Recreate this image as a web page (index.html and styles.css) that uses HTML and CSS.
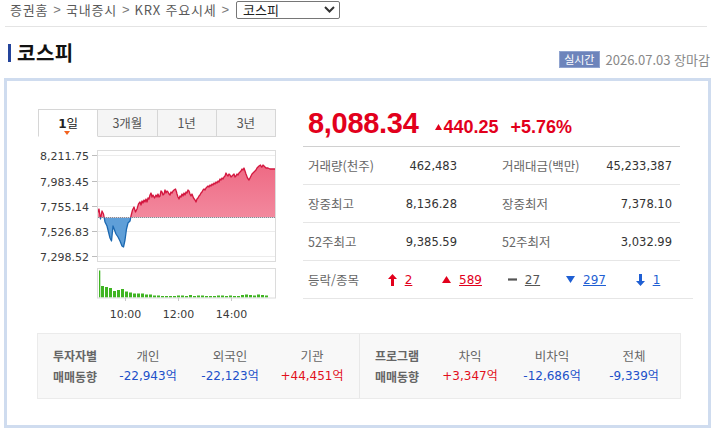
FILE: index.html
```html
<!DOCTYPE html>
<html lang="ko">
<head>
<meta charset="utf-8">
<title>코스피 : 국내증시</title>
<link rel="stylesheet" href="styles.css">
</head>
<body>
<nav class="crumbs">
  <a class="crumb">증권홈</a><span class="sep">&gt;</span>
  <a class="crumb">국내증시</a><span class="sep">&gt;</span>
  <a class="crumb">KRX 주요시세</a><span class="sep">&gt;</span>
  <div class="picker">
    <span>코스피</span>
    <svg width="11" height="7" viewBox="0 0 11 7"><path d="M1 1L5.5 5.5L10 1" fill="none" stroke="#333" stroke-width="2"/></svg>
  </div>
</nav>

<header class="title-row">
  <h2 class="title">코스피</h2>
  <div class="meta"><span class="badge">실시간</span><span class="stamp">2026.07.03 장마감</span></div>
</header>

<section class="board">
  <div class="top">
    <div class="chart-col">
      <ul class="tabs">
        <li class="tab on"><b>1</b>일</li>
        <li class="tab">3개월</li>
        <li class="tab">1년</li>
        <li class="tab">3년</li>
      </ul>
      <svg class="chart" width="240" height="170" viewBox="0 0 240 170">
        <defs>
          <clipPath id="above"><rect x="59" y="0" width="180" height="67.5"/></clipPath>
          <clipPath id="below"><rect x="59" y="67.5" width="180" height="45"/></clipPath>
          <linearGradient id="riseFill" x1="0" y1="0" x2="0" y2="1">
            <stop offset="0" stop-color="#ee6a84"/>
            <stop offset="1" stop-color="#f59aac"/>
          </linearGradient>
        </defs>
        <!-- price pane -->
        <g stroke="#ececec" stroke-width="1">
          <line x1="60" x2="237" y1="5.5" y2="5.5"/>
          <line x1="60" x2="237" y1="31.5" y2="31.5"/>
          <line x1="60" x2="237" y1="56.5" y2="56.5"/>
          <line x1="60" x2="237" y1="81.5" y2="81.5"/>
          <line x1="60" x2="237" y1="106.5" y2="106.5"/>
        </g>
        <g stroke="#bdbdbd" stroke-width="1">
          <line x1="54" x2="59" y1="5.5" y2="5.5"/>
          <line x1="54" x2="59" y1="31.5" y2="31.5"/>
          <line x1="54" x2="59" y1="56.5" y2="56.5"/>
          <line x1="54" x2="59" y1="81.5" y2="81.5"/>
          <line x1="54" x2="59" y1="106.5" y2="106.5"/>
        </g>
        <g class="axis" text-anchor="end">
          <text x="51" y="9.5">8,211.75</text>
          <text x="51" y="35.5">7,983.45</text>
          <text x="51" y="60.5">7,755.14</text>
          <text x="51" y="85.5">7,526.83</text>
          <text x="51" y="110.5">7,298.52</text>
        </g>
        <path fill="url(#riseFill)" clip-path="url(#above)" d="M59.5 67.5L59.5 63L61 59L62.5 69L64 61L65.5 64L67 72L69 76L70.5 82L72 88L73.5 91L75 76L76.5 80L78 84L80 87L82 91L84 96L85.5 97L87 90L88.5 79L90 73L92 71L93 66L94.5 60L96 57L97.5 62L99 59L100.5 54L102 52L103 55L104 51L105 53L106 50L107 52L108 49L109 52L110 48L111 49L112 45L113 43L114 47L115 45L116.5 48L118 45L119 47L120 44L121 47L122 46L123 41L124 42L125 45L126 44L127 40L128 43L129 41L130 42L131 44L132 45L133 42L134 43L135 41L136 40L137.5 39L138.5 42L139 44L140 47L141 49L142 46L143 47L144 44L145 46L146 43L147 45L148 42L149 43L150 40L151 41L152 44L153 46L154 44L155.5 48L157 50L158 52L159 49L160 48L161 46L162 45L163 43L164 42L165 40L166 39L167 40L168 38L169 37L170 36L171 37L172 35L173 36L174 34L175 35L176 33L177 34L178 32L179 33L180 31L181 32L182 29L183 30L184 28L185 29L186 27L187 26L188 23L189 25L190 26L191 24L192 25L193 27L194 26L195 25L196 24L197 27L198 26L199 24L200 25L201 23L202 22L203 21L204 19L205 20L206 18L207 21L208 24L209.5 28L211 30L212 28L213 26L214 24L215 23L216 22L217 21L218 20L219 18L220 17L221 16L222.5 15L223.5 17L224 17L225 15L226 16L227 17L228 18L230 18L232 19L234 19L236 19L237.5 19L237.5 67.5Z"/>
        <path fill="#5f9fd8" clip-path="url(#below)" d="M59.5 67.5L59.5 63L61 59L62.5 69L64 61L65.5 64L67 72L69 76L70.5 82L72 88L73.5 91L75 76L76.5 80L78 84L80 87L82 91L84 96L85.5 97L87 90L88.5 79L90 73L92 71L93 66L94.5 60L96 57L97.5 62L99 59L237.5 59L237.5 67.5Z"/>
        <line x1="60" x2="237" y1="67.5" y2="67.5" stroke="#8c8c8c" stroke-dasharray="1 1"/>
        <path fill="none" stroke="#d3173f" stroke-width="1.3" stroke-linejoin="round" clip-path="url(#above)" d="M59.5 63L61 59L62.5 69L64 61L65.5 64L67 72L69 76L70.5 82L72 88L73.5 91L75 76L76.5 80L78 84L80 87L82 91L84 96L85.5 97L87 90L88.5 79L90 73L92 71L93 66L94.5 60L96 57L97.5 62L99 59L100.5 54L102 52L103 55L104 51L105 53L106 50L107 52L108 49L109 52L110 48L111 49L112 45L113 43L114 47L115 45L116.5 48L118 45L119 47L120 44L121 47L122 46L123 41L124 42L125 45L126 44L127 40L128 43L129 41L130 42L131 44L132 45L133 42L134 43L135 41L136 40L137.5 39L138.5 42L139 44L140 47L141 49L142 46L143 47L144 44L145 46L146 43L147 45L148 42L149 43L150 40L151 41L152 44L153 46L154 44L155.5 48L157 50L158 52L159 49L160 48L161 46L162 45L163 43L164 42L165 40L166 39L167 40L168 38L169 37L170 36L171 37L172 35L173 36L174 34L175 35L176 33L177 34L178 32L179 33L180 31L181 32L182 29L183 30L184 28L185 29L186 27L187 26L188 23L189 25L190 26L191 24L192 25L193 27L194 26L195 25L196 24L197 27L198 26L199 24L200 25L201 23L202 22L203 21L204 19L205 20L206 18L207 21L208 24L209.5 28L211 30L212 28L213 26L214 24L215 23L216 22L217 21L218 20L219 18L220 17L221 16L222.5 15L223.5 17L224 17L225 15L226 16L227 17L228 18L230 18L232 19L234 19L236 19L237.5 19"/>
        <path fill="none" stroke="#1b68b0" stroke-width="1.3" stroke-linejoin="round" clip-path="url(#below)" d="M59.5 63L61 59L62.5 69L64 61L65.5 64L67 72L69 76L70.5 82L72 88L73.5 91L75 76L76.5 80L78 84L80 87L82 91L84 96L85.5 97L87 90L88.5 79L90 73L92 71L93 66L94.5 60L96 57L97.5 62L99 59"/>
        <rect x="59.5" y="0.5" width="178" height="111" fill="none" stroke="#dcdcdc"/>

        <!-- volume pane -->
        <path fill="#3fb422" d="M61 147.5h1.3v-27h-1.3z M63 147.5h3v-11.5h-3z M67 147.5h3v-10.5h-3z M71 147.5h3v-9.5h-3z M75 147.5h3v-6.5h-3z M79 147.5h3v-7.5h-3z M83 147.5h3v-8.5h-3z M87 147.5h3v-6h-3z M91 147.5h3v-5h-3z M95 147.5h3v-4h-3z M99 147.5h3v-4h-3z M103 147.5h3v-4h-3z M107 147.5h3v-3h-3z M111 147.5h3v-3h-3z M115 147.5h3v-2h-3z M119 147.5h3v-2h-3z M123 147.5h3v-1.5h-3z M127 147.5h3v-1.5h-3z M131 147.5h3v-1.5h-3z M135 147.5h3v-1.5h-3z M139 147.5h3v-2h-3z M143 147.5h3v-2h-3z M147 147.5h3v-1.5h-3z M151 147.5h3v-2.5h-3z M155 147.5h3v-1.5h-3z M159 147.5h3v-2h-3z M163 147.5h3v-2h-3z M167 147.5h3v-1.5h-3z M171 147.5h3v-1.5h-3z M175 147.5h3v-1.5h-3z M179 147.5h3v-2h-3z M183 147.5h3v-2h-3z M187 147.5h3v-1.5h-3z M191 147.5h3v-2h-3z M195 147.5h3v-1.5h-3z M199 147.5h3v-1.5h-3z M203 147.5h3v-2.5h-3z M207 147.5h3v-3h-3z M211 147.5h3v-2.5h-3z M215 147.5h3v-2h-3z M219 147.5h3v-3h-3z M223 147.5h3v-2.5h-3z M227 147.5h3v-2h-3z"/>
        <rect x="59.5" y="118.5" width="178" height="29.5" fill="none" stroke="#dcdcdc"/>
        <g stroke="#c8c8c8">
          <line x1="87.5" x2="87.5" y1="148" y2="151"/>
          <line x1="140.5" x2="140.5" y1="148" y2="151"/>
          <line x1="193.5" x2="193.5" y1="148" y2="151"/>
        </g>
        <g class="axis" text-anchor="middle">
          <text x="87.5" y="167.5">10:00</text>
          <text x="140.5" y="167.5">12:00</text>
          <text x="193.5" y="167.5">14:00</text>
        </g>
      </svg>
    </div>

    <div class="info-col">
      <div class="quote">
        <span class="now">8,088.34</span>
        <span class="chg"><svg width="7" height="6" viewBox="0 0 7 6"><path d="M3.5 0L7 6H0Z" fill="#e2001c"/></svg>440.25</span>
        <span class="rate">+5.76%</span>
      </div>
      <div class="stats">
        <div class="row">
          <span class="lbl">거래량(천주)</span><span class="val">462,483</span>
          <span class="lbl second">거래대금(백만)</span><span class="val">45,233,387</span>
        </div>
        <div class="row">
          <span class="lbl">장중최고</span><span class="val">8,136.28</span>
          <span class="lbl second">장중최저</span><span class="val">7,378.10</span>
        </div>
        <div class="row">
          <span class="lbl">52주최고</span><span class="val">9,385.59</span>
          <span class="lbl second">52주최저</span><span class="val">3,032.99</span>
        </div>
        <div class="row breadth">
          <span class="lbl">등락/종목</span>
          <span class="cnt up"><svg width="9" height="12" viewBox="0 0 9 12"><path d="M4.5 0L9 5H6V12H3V5H0Z"/></svg><a>2</a></span>
          <span class="cnt up"><svg width="9" height="7" viewBox="0 0 9 7"><path d="M4.5 0L9 7H0Z"/></svg><a>589</a></span>
          <span class="cnt flat"><svg width="9" height="3" viewBox="0 0 9 3"><rect y="0.4" width="9" height="2.2"/></svg><a>27</a></span>
          <span class="cnt down"><svg width="9" height="7" viewBox="0 0 9 7"><path d="M0 0H9L4.5 7Z"/></svg><a>297</a></span>
          <span class="cnt down"><svg width="9" height="12" viewBox="0 0 9 12"><path d="M3 0H6V7H9L4.5 12L0 7H3Z"/></svg><a>1</a></span>
        </div>
      </div>
    </div>
  </div>

  <div class="flows">
    <div class="flow">
      <div class="flow-lbl">투자자별<br>매매동향</div>
      <div class="cell"><span class="head">개인</span><span class="amt minus">-22,943억</span></div>
      <div class="cell"><span class="head">외국인</span><span class="amt minus">-22,123억</span></div>
      <div class="cell"><span class="head">기관</span><span class="amt plus">+44,451억</span></div>
    </div>
    <div class="flow">
      <div class="flow-lbl">프로그램<br>매매동향</div>
      <div class="cell"><span class="head">차익</span><span class="amt plus">+3,347억</span></div>
      <div class="cell"><span class="head">비차익</span><span class="amt minus">-12,686억</span></div>
      <div class="cell"><span class="head">전체</span><span class="amt minus">-9,339억</span></div>
    </div>
  </div>
</section>
</body>
</html>
```

FILE: styles.css
```css
* { box-sizing: border-box; }

html, body {
  margin: 0;
  padding: 0;
  background: #fff;
}

body {
  width: 720px;
  height: 432px;
  overflow: hidden;
  font-family: "Noto Sans CJK KR", "Noto Sans", sans-serif;
  color: #333;
}

ul { list-style: none; margin: 0; padding: 0; }
a { color: inherit; }

/* breadcrumb */
.crumbs {
  display: flex;
  align-items: center;
  height: 27px;
  margin: 0 13px 0 5px;
  padding: 1px 0 8px 5px;
  border-bottom: 1px solid #e4e4e4;
  font-size: 13px;
  line-height: 17px;
  letter-spacing: 0.8px;
  color: #5a5a5a;
}

.sep {
  margin: 0 5px 0 5px;
  font-family: "Liberation Sans", Arial, sans-serif;
  letter-spacing: 0;
  color: #777;
}

.picker {
  display: flex;
  align-items: center;
  justify-content: space-between;
  width: 104px;
  height: 18px;
  margin-left: 2px;
  padding: 0 4px 0 6px;
  border: 1px solid #767676;
  border-radius: 2px;
  letter-spacing: 0;
  color: #222;
}

/* title */
.title-row {
  display: flex;
  justify-content: space-between;
  align-items: flex-start;
  height: 51px;
  padding: 15px 10px 0 8px;
}

.title {
  display: flex;
  align-items: center;
  margin: 0;
  font-size: 20px;
  font-weight: 700;
  line-height: 22px;
  letter-spacing: 0.5px;
  color: #111;
}

.title::before {
  content: "";
  width: 3px;
  height: 18px;
  margin-right: 6px;
  background: #24449b;
}

.meta {
  display: flex;
  align-items: center;
  gap: 6px;
  height: 17px;
  margin-top: 9px;
}

.badge {
  padding: 0 4px;
  border: 1px solid #8fa3cf;
  background: #6d84bb;
  color: #fff;
  font-size: 11px;
  line-height: 15px;
}

.stamp {
  font-size: 13px;
  color: #888;
}

/* main board */
.board {
  margin: 0 9px 0 4px;
  padding: 25px 0 26px 30px;
  border: 3px solid #cfdcef;
}

.top {
  display: flex;
  margin-left: 1px;
}

.chart-col {
  width: 240px;
  padding-top: 3px;
}

.tabs {
  display: flex;
  width: 238px;
  height: 28px;
}

.tab {
  position: relative;
  flex: 1;
  border: 1px solid #d6d6d6;
  border-left: none;
  background: #f5f5f5;
  font-size: 12.5px;
  line-height: 26px;
  text-align: center;
  color: #555;
}

.tab:first-child { border-left: 1px solid #d6d6d6; }

.tab.on {
  border-bottom-color: #fff;
  background: #fff;
  color: #222;
}

.tab.on b { font-family: "DejaVu Sans", sans-serif; font-size: 12px; }

.tab.on::after {
  content: "";
  position: absolute;
  left: 50%;
  bottom: 1px;
  margin-left: -4px;
  border-left: 3.5px solid transparent;
  border-right: 3.5px solid transparent;
  border-top: 4px solid #f2621f;
}

.chart {
  display: block;
  margin-top: 13px;
}

.axis {
  font-family: "DejaVu Sans", sans-serif;
  font-size: 11px;
  fill: #3a3a3a;
}

/* quote & stats */
.info-col {
  width: 377px;
  margin-left: 25px;
}

.quote {
  display: flex;
  align-items: baseline;
  height: 32px;
  padding-left: 5px;
  color: #e2001c;
  font-family: "Liberation Sans", Arial, sans-serif;
}

.now {
  font-size: 29px;
  font-weight: 700;
  line-height: 34px;
  letter-spacing: -0.3px;
}

.chg {
  margin-left: 16px;
  font-size: 18px;
  font-weight: 700;
}

.chg svg {
  margin-right: 2px;
  vertical-align: 3px;
}

.rate {
  margin-left: 12px;
  font-size: 18px;
  font-weight: 700;
}

.stats {
  margin-top: 8px;
  border-top: 1px solid #d0d0d0;
}

.row {
  display: grid;
  grid-template-columns: 92px 57px 143px 72px;
  align-items: center;
  height: 38px;
  padding-left: 5px;
  border-bottom: 1px solid #e6e6e6;
}

.lbl {
  font-size: 12.5px;
  color: #666;
  white-space: nowrap;
}

.lbl.second { padding-left: 45px; }

.val {
  text-align: right;
  font-family: "DejaVu Sans", sans-serif;
  font-size: 11.5px;
  color: #333;
  white-space: nowrap;
}

.row.breadth {
  grid-template-columns: 61px repeat(5, 62px);
  margin-right: -13px;
}

.cnt {
  display: flex;
  align-items: center;
  justify-content: center;
  gap: 8px;
  font-family: "DejaVu Sans", sans-serif;
  font-size: 12px;
}

.cnt a { text-decoration: underline; }
.cnt.up { color: #e2001c; fill: #e2001c; }
.cnt.flat { color: #555; fill: #555; }
.cnt.down { color: #1f5fd3; fill: #1f5fd3; }

/* investor flows */
.flows {
  display: flex;
  width: 644px;
  height: 66px;
  margin-top: 13px;
  border: 1px solid #ebebeb;
  background: #f8f8f8;
}

.flow {
  display: grid;
  grid-template-columns: 54px repeat(3, 82px);
  width: 321px;
  padding: 11px 0 0 15px;
}

.flow + .flow { border-left: 1px solid #e8e8e8; }

.flow-lbl {
  font-size: 12px;
  font-weight: 700;
  line-height: 21px;
  color: #666;
}

.cell {
  display: flex;
  flex-direction: column;
  align-items: center;
  line-height: 21px;
}

.head {
  font-size: 12.5px;
  color: #666;
}

.amt {
  font-family: "DejaVu Sans", "Noto Sans CJK KR", sans-serif;
  font-size: 12px;
  white-space: nowrap;
}

.amt.minus { color: #2150c9; }
.amt.plus { color: #e2101c; }
```
